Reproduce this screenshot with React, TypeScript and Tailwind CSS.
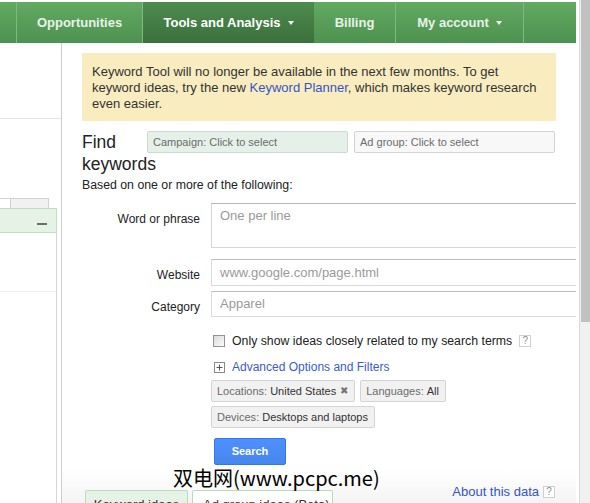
import React from "react";

function Caret() {
  return <span className="ml-[7px] mt-[1px] h-0 w-0 border-x-[3.5px] border-t-[4px] border-x-transparent border-t-[#f2f7f2]" />;
}

function Help() {
  return (
    <span className="flex h-[12px] w-[12px] shrink-0 items-center justify-center border border-[#cfcfcf] bg-white text-[10px] leading-none text-[#8f8f8f]">
      ?
    </span>
  );
}

function Chip({ name, value, remove }: { name: string; value: string; remove?: boolean }) {
  return (
    <div className="flex h-[22px] items-center rounded-[2px] border border-[#d4d4d4] bg-[#f1f1f1] pl-[5px] pr-[6px] text-[11px] text-[#333]">
      <span className="text-[#6b6b6b]">{name}:</span>
      <span className="ml-[3px]">{value}</span>
      {remove && <span className="ml-[4px] text-[10px] leading-none text-[#777]">✖</span>}
    </div>
  );
}

function LeftPanel() {
  return (
    <div className="flex w-[62px] shrink-0 flex-col border-r border-[#cdcdcd]">
      <div className="h-[76px] shrink-0 border-b border-[#e4e4e4]" />
      <div className="h-[79px] shrink-0" />
      <div className="flex h-[10px] shrink-0">
        <div className="w-[11px] border-r border-t border-[#d2d2d2] bg-white" />
        <div className="w-[38px] border-r border-t border-[#d2d2d2] bg-[#f1f1f1]" />
      </div>
      <div className="flex h-[25px] w-[57px] shrink-0 items-end justify-end border border-l-0 border-[#bfe0bf] bg-[#e7f2e7] pb-[7px] pr-[9px]">
        <div className="h-[2px] w-[10px] bg-[#6d6d6d]" />
      </div>
      <div className="w-[57px] flex-1 border-r border-[#d6d6d6]">
        <div className="h-[59px] border-b border-[#efefef]" />
      </div>
    </div>
  );
}

function Content() {
  return (
    <div className="flex w-[514px] shrink-0 flex-col overflow-hidden pl-[20px]">
      <div className="mt-[10px] h-[68px] w-[474px] shrink-0 bg-[#f9ecbf] px-[10px] pt-[11px] text-[13px] leading-[16px] text-[#333]">
        Keyword Tool will no longer be available in the next few months. To get keyword ideas, try the new{" "}
        <span className="text-[#3554c8]">Keyword Planner</span>, which makes keyword research even easier.
      </div>

      <div className="mt-[10px] flex shrink-0">
        <h2 className="w-[65px] shrink-0 text-[17.5px] font-normal leading-[22px] text-[#222]">Find keywords</h2>
        <div className="flex gap-[6px]">
          <div className="flex h-[22px] w-[201px] items-center rounded-[2px] border border-[#c9dccf] bg-[#e5f1e8] pl-[5px] text-[11px] text-[#6b6b6b]">
            Campaign: Click to select
          </div>
          <div className="flex h-[22px] w-[201px] items-center rounded-[2px] border border-[#d3d3d3] bg-[#f8f8f8] pl-[5px] text-[11px] text-[#6b6b6b]">
            Ad group: Click to select
          </div>
        </div>
      </div>

      <p className="mt-[2px] shrink-0 text-[12.3px] leading-[16px] text-[#222]">Based on one or more of the following:</p>

      <div className="mt-[10px] flex shrink-0 items-start">
        <span className="w-[118px] shrink-0 pt-[8px] text-right text-[12px] leading-[16px] text-[#222]">Word or phrase</span>
        <div className="ml-[11px] h-[45px] w-[380px] shrink-0 border border-[#d6d6d6] border-t-[#b8b8b8] pl-[8px] pt-[4px] text-[13px] leading-[16px] text-[#9a9a9a]">
          One per line
        </div>
      </div>
      <div className="mt-[11px] flex shrink-0 items-start">
        <span className="w-[118px] shrink-0 pt-[8px] text-right text-[12px] leading-[16px] text-[#222]">Website</span>
        <div className="ml-[11px] flex h-[27px] w-[380px] shrink-0 items-center border border-[#d9d9d9] border-t-[#bdbdbd] pl-[8px] text-[13px] text-[#9a9a9a]">
          www.google.com/page.html
        </div>
      </div>
      <div className="mt-[5px] flex shrink-0 items-start">
        <span className="w-[118px] shrink-0 pt-[8px] text-right text-[12px] leading-[16px] text-[#222]">Category</span>
        <div className="ml-[11px] flex h-[26px] w-[380px] shrink-0 items-center border border-[#d9d9d9] border-t-[#bdbdbd] pl-[8px] text-[13px] text-[#9a9a9a]">
          Apparel
        </div>
      </div>

      <div className="mt-[16px] flex h-[16px] shrink-0 items-center pl-[131px]">
        <span className="h-[12px] w-[12px] shrink-0 border border-[#939393] bg-gradient-to-br from-[#dadada] to-[#fbfbfb]" />
        <span className="ml-[7px] text-[12.3px] leading-[16px] text-[#222]">Only show ideas closely related to my search terms</span>
        <span className="ml-[7px]">
          <Help />
        </span>
      </div>

      <div className="mt-[10px] flex h-[16px] shrink-0 items-center pl-[132px]">
        <svg width="11" height="11" viewBox="0 0 11 11" className="shrink-0">
          <rect x="0.5" y="0.5" width="10" height="10" fill="#fff" stroke="#8a8a8a" />
          <path d="M2.5 5.5h6M5.5 2.5v6" stroke="#555" strokeWidth="1" />
        </svg>
        <span className="ml-[7px] text-[12px] leading-[16px] text-[#3a5bd6]">Advanced Options and Filters</span>
      </div>

      <div className="mt-[5px] flex shrink-0 gap-[5px] pl-[129px]">
        <Chip name="Locations" value="United States" remove />
        <Chip name="Languages" value="All" />
      </div>
      <div className="mt-[4px] flex shrink-0 pl-[129px]">
        <Chip name="Devices" value="Desktops and laptops" />
      </div>

      <button className="ml-[132px] mt-[10px] flex h-[27px] w-[72px] shrink-0 items-center justify-center rounded-[2px] border border-[#3079ed] bg-gradient-to-b from-[#4d90fe] to-[#4787ed] text-[11px] font-bold text-white">
        Search
      </button>

      <div className="-ml-[20px] mt-[5px] flex w-[514px] flex-1 items-start bg-gradient-to-b from-white to-[#eeeeee] pl-[23px] pr-[21px] pt-[14px]">
        <div className="mt-[6px] flex gap-[4px]">
          <div className="h-[30px] w-[103px] rounded-t-[2px] border border-b-0 border-[#b7dcb7] bg-[#e6f2e6] pt-[6px] text-center text-[13px] leading-[16px] text-[#333]">
            Keyword ideas
          </div>
          <div className="h-[30px] w-[141px] rounded-t-[2px] border border-b-0 border-[#b7dcb7] bg-white pl-[10px] pt-[6px] text-[13px] leading-[16px] text-[#333]">
            Ad group ideas (Beta)
          </div>
        </div>
        <div className="ml-auto flex items-start">
          <span className="text-[13px] leading-[16px] text-[#3554c8]">About this data</span>
          <span className="ml-[4px] mt-[2px]">
            <Help />
          </span>
        </div>
      </div>
    </div>
  );
}

export default function App() {
  return (
    <div className="relative flex h-[503px] w-[590px] overflow-hidden bg-white font-['Liberation_Sans',Arial,sans-serif] text-[#222]">
      <div className="flex w-[579px] shrink-0 flex-col">
        <div className="h-[2px] shrink-0" />
        <nav className="flex h-[41px] w-[576px] shrink-0 bg-gradient-to-b from-[#62a962] to-[#4d9250] text-[13px] font-bold text-[#e8f2e8]">
          <div className="w-[17px] border-r border-[#7dba7d]" />
          <div className="flex w-[126px] items-center justify-center border-r border-[#7dba7d]">Opportunities</div>
          <div className="flex w-[171px] items-center justify-center bg-gradient-to-b from-[#4e8c4e] to-[#3b703c] text-white">
            Tools and Analysis
            <Caret />
          </div>
          <div className="flex w-[82px] items-center justify-center border-r border-[#7dba7d]">Billing</div>
          <div className="flex w-[128px] items-center justify-center border-r border-[#7dba7d]">
            My account
            <Caret />
          </div>
          <div className="flex-1" />
        </nav>
        <div className="flex min-h-0 flex-1">
          <LeftPanel />
          <Content />
        </div>
      </div>
      <div className="flex h-full w-[11px] shrink-0 flex-col border-l border-[#d9d9d9] bg-[#f1f1f1]">
        <div className="ml-[1px] h-[322px] bg-[#c1c1c1]" />
      </div>
      <div className="absolute left-[173px] top-[466px] whitespace-nowrap font-['Noto_Sans_CJK_SC',sans-serif] text-[20px] leading-[24px] text-black">
        双电网(www.pcpc.me)
      </div>
    </div>
  );
}
